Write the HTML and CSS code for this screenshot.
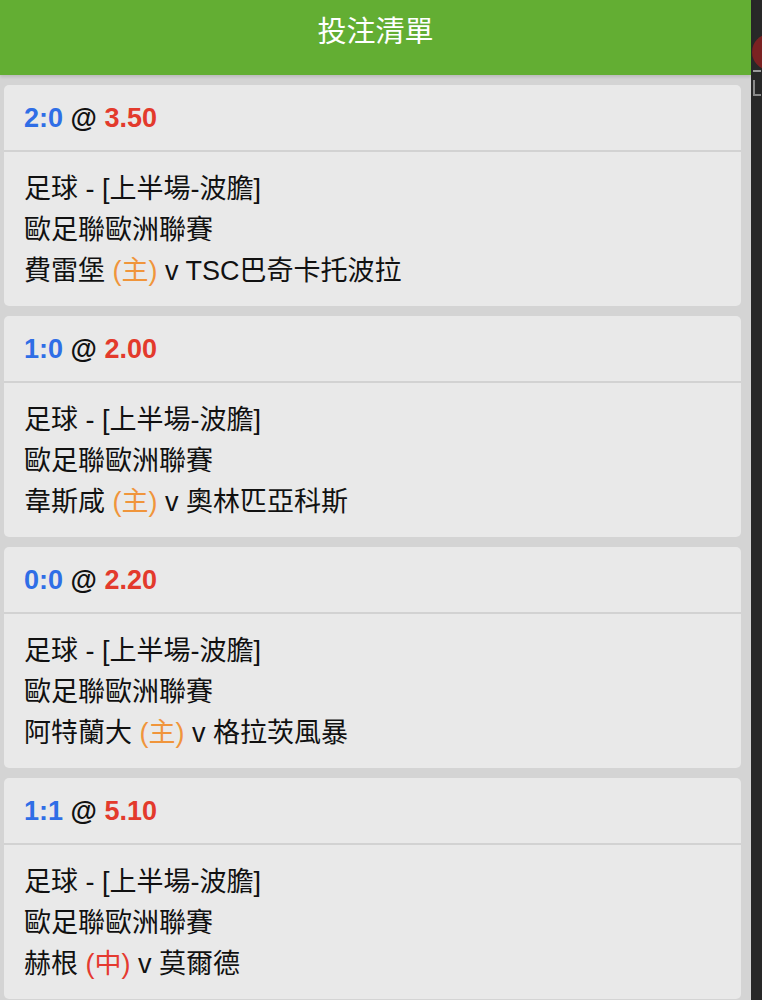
FILE: index.html
```html
<!DOCTYPE html>
<html lang="zh-Hant">
<head>
<meta charset="utf-8">
<link rel="stylesheet" href="styles.css">
</head>
<body>
<div class="screen">
  <div class="panel">
    <div class="topbar">投注清單</div>
    <div class="list">
      <div class="card">
        <div class="card-head"><span class="score">2:0</span> @ <span class="odds">3.50</span></div>
        <div class="card-body">
          <div class="line">足球 - [上半場-波膽]</div>
          <div class="line">歐足聯歐洲聯賽</div>
          <div class="line">費雷堡 <span class="home">(主)</span> v TSC巴奇卡托波拉</div>
        </div>
      </div>
      <div class="card">
        <div class="card-head"><span class="score">1:0</span> @ <span class="odds">2.00</span></div>
        <div class="card-body">
          <div class="line">足球 - [上半場-波膽]</div>
          <div class="line">歐足聯歐洲聯賽</div>
          <div class="line">韋斯咸 <span class="home">(主)</span> v 奧林匹亞科斯</div>
        </div>
      </div>
      <div class="card">
        <div class="card-head"><span class="score">0:0</span> @ <span class="odds">2.20</span></div>
        <div class="card-body">
          <div class="line">足球 - [上半場-波膽]</div>
          <div class="line">歐足聯歐洲聯賽</div>
          <div class="line">阿特蘭大 <span class="home">(主)</span> v 格拉茨風暴</div>
        </div>
      </div>
      <div class="card">
        <div class="card-head"><span class="score">1:1</span> @ <span class="odds">5.10</span></div>
        <div class="card-body">
          <div class="line">足球 - [上半場-波膽]</div>
          <div class="line">歐足聯歐洲聯賽</div>
          <div class="line">赫根 <span class="neutral">(中)</span> v 莫爾德</div>
        </div>
      </div>
    </div>
  </div>
  <div class="side">
    <div class="side-dot"></div>
    <div class="side-mark"></div>
    <div class="side-mark2"></div>
  </div>
</div>
</body>
</html>
```
FILE: styles.css
```css
html, body {
  margin: 0;
  padding: 0;
  background: #2a2a2a;
}
body {
  font-family: "Liberation Sans", "Noto Sans CJK TC", sans-serif;
  color: #111;
}
.screen {
  display: flex;
  width: 762px;
  height: 1000px;
  overflow: hidden;
}
.panel {
  width: 751px;
  flex: none;
  background: #d4d4d4;
  display: flex;
  flex-direction: column;
}
.topbar {
  height: 75px;
  flex: none;
  background: #63ae33;
  color: #ffffff;
  font-family: "Noto Sans CJK TC", sans-serif;
  font-size: 29px;
  line-height: 58px;
  text-align: center;
  box-shadow: 0 2px 3px rgba(0, 0, 0, 0.12);
  position: relative;
  z-index: 1;
}
.list {
  padding: 10px 10px 0 4px;
  display: flex;
  flex-direction: column;
  gap: 10px;
}
.card {
  background: #e9e9e9;
  border-radius: 5px;
  height: 221px;
  flex: none;
  box-sizing: border-box;
}
.card-head {
  height: 67px;
  box-sizing: border-box;
  border-bottom: 2px solid #d2d2d2;
  padding-left: 20px;
  font-size: 27px;
  font-weight: bold;
  line-height: 66px;
  color: #111;
}
.score { color: #2f6ee6; }
.odds { color: #e33a2c; }
.card-body {
  padding: 17px 20px 0 20px;
  font-size: 27px;
  line-height: 41px;
  color: #111;
}
.home { color: #f0953b; }
.neutral { color: #e53a30; }
.side {
  flex: 1;
  background: #282828;
  position: relative;
  overflow: hidden;
}
.side-dot {
  position: absolute;
  left: 1px;
  top: 34px;
  width: 36px;
  height: 36px;
  border-radius: 50%;
  background: #7b2222;
}
.side-mark {
  position: absolute;
  left: 2px;
  top: 70px;
  width: 8px;
  height: 2px;
  background: #9a9a9a;
}
.side-mark2 {
  position: absolute;
  left: 2px;
  top: 80px;
  width: 6px;
  height: 14px;
  border-left: 2px solid #8a8a8a;
  border-bottom: 2px solid #8a8a8a;
}
```
